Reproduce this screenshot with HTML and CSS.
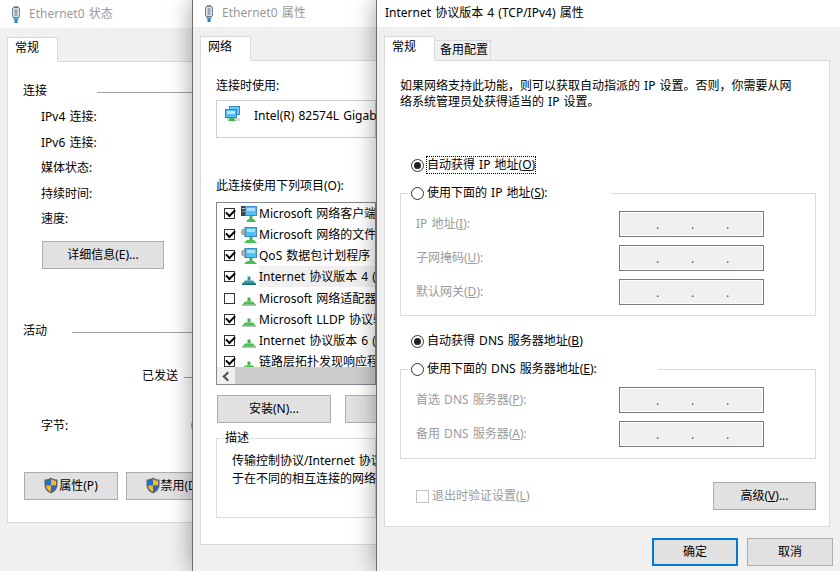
FILE: index.html
```html
<!DOCTYPE html>
<html lang="zh-CN">
<head>
<meta charset="utf-8">
<title>Ethernet0</title>
<link rel="stylesheet" href="styles.css">
</head>
<body>
<svg class="defs" aria-hidden="true">
  <symbol id="plug" viewBox="0 0 10 17">
    <rect x="3" y="0" width="4" height="2" fill="#8a97a6"/>
    <rect x="1.5" y="1.5" width="7" height="10" rx="1.5" fill="#dfe5ea" stroke="#6f7c8b"/>
    <rect x="3.5" y="3" width="3" height="7" fill="#9aa7b5"/>
    <rect x="2.5" y="12" width="5" height="2" fill="#5aa6dc"/>
    <rect x="3.5" y="14" width="3" height="3" fill="#1f7fc4"/>
  </symbol>
  <symbol id="base" viewBox="0 0 16 16">
    <rect x="6.5" y="7.5" width="3" height="4" fill="#3fb54a"/>
    <path d="M1 15 L4 11.5 H12 L15 15 Z" fill="#49bf54"/>
    <rect x="1" y="14.5" width="14" height="1.5" fill="#b9bdb9"/>
  </symbol>
  <symbol id="base-teal" viewBox="0 0 16 16">
    <rect x="6.5" y="7.5" width="3" height="4" fill="#2b9aa0"/>
    <path d="M1 15 L4 11.5 H12 L15 15 Z" fill="#2f9ea6"/>
    <rect x="1" y="14.5" width="14" height="1.5" fill="#1f6f78"/>
  </symbol>
  <symbol id="mon-client" viewBox="0 0 16 16">
    <rect x="0" y="0" width="5" height="10" fill="#3f444a"/>
    <rect x="1" y="2" width="3" height="1" fill="#c8ccd0"/>
    <rect x="1" y="5" width="3" height="1" fill="#8d9298"/>
    <rect x="4.5" y="0.5" width="11" height="9" fill="#4fc0f5" stroke="#3a8cc8"/>
    <rect x="6" y="2" width="8" height="3" fill="#a9e3fb"/>
    <rect x="8.5" y="10" width="3" height="3" fill="#3fb54a"/>
    <path d="M5 16 L7 13 H13 L15 16 Z" fill="#49bf54"/>
  </symbol>
  <symbol id="mon-gear" viewBox="0 0 16 16">
    <circle cx="3.500" cy="5" r="3" fill="#c6cace" stroke="#8b9096"/>
    <path d="M3.500 0V10M0 5H7M1 2L6 8M6 2L1 8" stroke="#a3a8ad"/>
    <rect x="4.500" y="0.500" width="11" height="9" fill="#4fc0f5" stroke="#3a8cc8"/>
    <rect x="6" y="2" width="8" height="3" fill="#a9e3fb"/>
    <rect x="8.500" y="10" width="3" height="3" fill="#3fb54a"/>
    <path d="M3 16 L6 13 H13 L16 16 Z" fill="#49bf54"/>
  </symbol>
  <symbol id="adapter" viewBox="0 0 15 15">
    <rect x="4.500" y="0.500" width="10" height="8" fill="#6ccbf5" stroke="#3a8cc8"/>
    <rect x="0.500" y="3.500" width="11" height="8" fill="#4fc0f5" stroke="#2f86c6"/>
    <rect x="2" y="5" width="8" height="3" fill="#b5e8fc"/>
    <rect x="2" y="12" width="13" height="3" fill="#d6d9d6"/>
    <path d="M3.500 15 L5 12 H9 L10.500 15 Z" fill="#3fb54a"/>
  </symbol>
  <symbol id="shield" viewBox="0 0 14 17">
    <path d="M7 0.500 C9 2 11.500 2.500 13.500 2.500 V8 C13.500 12 10.500 15 7 16.500 C3.500 15 0.500 12 0.500 8 V2.500 C2.500 2.500 5 2 7 0.500 Z" fill="#5b6470"/>
    <path d="M7 2 V8.500 H2 V3.800 C3.800 3.700 5.500 3.200 7 2 Z" fill="#1c6fc4"/>
    <path d="M7 2 C8.500 3.200 10.200 3.700 12 3.800 V8.500 H7 Z" fill="#f6b82a"/>
    <path d="M2 8.500 H7 V14.800 C4.200 13.500 2.200 11.300 2 8.500 Z" fill="#f6b82a"/>
    <path d="M7 8.500 H12 C11.800 11.300 9.800 13.500 7 14.800 Z" fill="#1c6fc4"/>
  </symbol>
</svg>

<section class="window win-status">
  <header class="titlebar titlebar-tall inactive">
    <svg class="plug"><use href="#plug"/></svg><span>Ethernet0 状态</span>
  </header>
  <nav class="tabs"><span class="tab active">常规</span></nav>
  <div class="panel status-panel">
    <div class="group-head"><span>连接</span><i class="rule rule-long"></i></div>
    <ul class="facts">
      <li>IPv4 连接:</li>
      <li>IPv6 连接:</li>
      <li>媒体状态:</li>
      <li>持续时间:</li>
      <li>速度:</li>
    </ul>
    <button class="btn btn-details">详细信息(E)...</button>
    <div class="group-head head-activity"><span>活动</span><i class="rule rule-short"></i></div>
    <div class="sent"><span>已发送</span><i class="rule"></i></div>
    <div class="bytes"><span>字节:</span><span>0</span></div>
    <div class="btn-row">
      <button class="btn btn-shield"><svg class="shield"><use href="#shield"/></svg>属性(P)</button>
      <button class="btn btn-shield"><svg class="shield"><use href="#shield"/></svg>禁用(D)</button>
    </div>
  </div>
</section>

<section class="window win-props">
  <header class="titlebar inactive">
    <svg class="plug"><use href="#plug"/></svg><span>Ethernet0 属性</span>
  </header>
  <nav class="tabs"><span class="tab active">网络</span></nav>
  <div class="panel props-panel">
    <div class="line">连接时使用:</div>
    <div class="adapter"><svg class="adapter-icon"><use href="#adapter"/></svg><span>Intel(R) 82574L Gigabit Network Connection</span></div>
    <div class="line items-head">此连接使用下列项目(O):</div>
    <div class="listbox">
      <ul class="rows">
        <li class="row"><span class="check on"></span><svg class="row-icon"><use href="#mon-client"/></svg><span class="row-text">Microsoft 网络客户端</span></li>
        <li class="row"><span class="check on"></span><svg class="row-icon"><use href="#mon-gear"/></svg><span class="row-text">Microsoft 网络的文件和打印机共享</span></li>
        <li class="row"><span class="check on"></span><svg class="row-icon"><use href="#mon-gear"/></svg><span class="row-text">QoS 数据包计划程序</span></li>
        <li class="row selected"><span class="check on"></span><svg class="row-icon"><use href="#base-teal"/></svg><span class="row-text">Internet 协议版本 4 (TCP/IPv4)</span></li>
        <li class="row"><span class="check"></span><svg class="row-icon"><use href="#base"/></svg><span class="row-text">Microsoft 网络适配器多路传送器协议</span></li>
        <li class="row"><span class="check on"></span><svg class="row-icon"><use href="#base"/></svg><span class="row-text">Microsoft LLDP 协议驱动程序</span></li>
        <li class="row"><span class="check on"></span><svg class="row-icon"><use href="#base"/></svg><span class="row-text">Internet 协议版本 6 (TCP/IPv6)</span></li>
        <li class="row"><span class="check on"></span><svg class="row-icon"><use href="#base"/></svg><span class="row-text">链路层拓扑发现响应程序</span></li>
      </ul>
      <div class="hscroll"><span class="arrow"></span><span class="thumb"></span></div>
    </div>
    <div class="btn-row props-btns">
      <button class="btn btn-install">安装(N)...</button>
      <button class="btn btn-install">卸载(U)</button>
    </div>
    <fieldset class="box desc">
      <legend>描述</legend>
      <p>传输控制协议/Internet 协议。该协议是默认的广域网络协议，用<br>于在不同的相互连接的网络上通讯。</p>
    </fieldset>
  </div>
</section>

<section class="window win-ipv4">
  <header class="titlebar"><span>Internet 协议版本 4 (TCP/IPv4) 属性</span></header>
  <nav class="tabs"><span class="tab active">常规</span><span class="tab">备用配置</span></nav>
  <div class="panel ipv4-panel">
    <p class="intro">如果网络支持此功能，则可以获取自动指派的 IP 设置。否则，你需要从网<br>络系统管理员处获得适当的 IP 设置。</p>
    <div class="choice first"><span class="radio on"></span><span class="focus">自动获得 IP 地址(<u>O</u>)</span></div>
    <fieldset class="box ip-box">
      <legend class="choice legend-ip"><span class="radio"></span><span class="plain">使用下面的 IP 地址(<u>S</u>):</span></legend>
      <div class="field"><span>IP 地址(<u>I</u>):</span><span class="ip"><b>.</b><b>.</b><b>.</b></span></div>
      <div class="field"><span>子网掩码(<u>U</u>):</span><span class="ip"><b>.</b><b>.</b><b>.</b></span></div>
      <div class="field"><span>默认网关(<u>D</u>):</span><span class="ip"><b>.</b><b>.</b><b>.</b></span></div>
    </fieldset>
    <div class="choice dns-first"><span class="radio on"></span><span class="plain">自动获得 DNS 服务器地址(<u>B</u>)</span></div>
    <fieldset class="box dns-box">
      <legend class="choice legend-dns"><span class="radio"></span><span class="plain">使用下面的 DNS 服务器地址(<u>E</u>):</span></legend>
      <div class="field"><span>首选 DNS 服务器(<u>P</u>):</span><span class="ip"><b>.</b><b>.</b><b>.</b></span></div>
      <div class="field"><span>备用 DNS 服务器(<u>A</u>):</span><span class="ip"><b>.</b><b>.</b><b>.</b></span></div>
    </fieldset>
    <div class="bottom-row">
      <div class="validate"><span class="check disabled"></span><span>退出时验证设置(<u>L</u>)</span></div>
      <button class="btn btn-adv">高级(<u>V</u>)...</button>
    </div>
  </div>
  <footer class="dialog-foot">
    <button class="btn btn-dialog default">确定</button>
    <button class="btn btn-dialog">取消</button>
  </footer>
</section>
</body>
</html>
```
FILE: styles.css
```css
* { box-sizing: border-box; }
html, body { margin: 0; padding: 0; }
body {
  position: relative;
  width: 840px;
  height: 571px;
  overflow: hidden;
  background: #f0f0f0;
  color: #000;
  font: 12px/16px "Noto Sans", "Noto Sans CJK SC", sans-serif;
  word-spacing: 1px;
}
.defs { position: absolute; width: 0; height: 0; }
ul { list-style: none; margin: 0; padding: 0; }
p { margin: 0; }
u { text-underline-offset: 1px; }

/* Windows on the desktop */
.window {
  position: absolute;
  top: 0;
  height: 571px;
  display: flex;
  flex-direction: column;
  background: #f0f0f0;
  overflow: hidden;
  padding: 0 7px;
}
.win-status { left: 0; width: 205px; z-index: 1; }
.win-props {
  left: 192px;
  width: 192px;
  z-index: 2;
  border-left: 1px solid #6e6e6e;
  box-shadow: 0 0 22px rgba(0, 0, 0, .38);
}
.win-ipv4 {
  left: 376px;
  width: 464px;
  z-index: 3;
  border-left: 1px solid #6e6e6e;
  box-shadow: 0 0 22px rgba(0, 0, 0, .38);
}

.titlebar {
  height: 27px;
  margin: 0 -7px;
  padding: 0 0 1px 8px;
  background: #fff;
  display: flex;
  align-items: center;
  flex: none;
}
.titlebar-tall { height: 28px; padding-bottom: 0; padding-left: 11px; }
.win-props .titlebar { padding-left: 11px; }
.inactive { color: #999; }
.plug { width: 10px; height: 17px; margin-right: 8px; flex: none; }

.tabs {
  display: flex;
  align-items: flex-end;
  flex: none;
  height: 25px;
  margin-top: 9px;
  margin-bottom: -1px;
  position: relative;
  z-index: 1;
}
.tab {
  height: 21px;
  padding: 1px 0 0 5px;
  width: 56px;
  border: 1px solid #d9d9d9;
  border-left: 0;
  background: #f0f0f0;
}
.tab.active {
  width: 51px;
  height: 25px;
  padding: 2px 0 0 7px;
  background: #fff;
  border: 1px solid #d9d9d9;
  border-bottom-color: #fff;
}
.panel {
  background: #fff;
  border: 1px solid #d9d9d9;
  flex: none;
}

/* Buttons */
.btn {
  font: inherit;
  word-spacing: inherit;
  color: #000;
  background: #e1e1e1;
  border: 1px solid #adadad;
  height: 28px;
  padding: 0;
  border-radius: 0;
  display: inline-flex;
  align-items: center;
  justify-content: center;
  flex: none;
}
.btn-row { display: flex; }

/* Status window */
.status-panel { height: 462px; padding: 21px 0 0 15px; }
.group-head { display: flex; align-items: center; height: 16px; }
.rule { display: block; flex: 1; height: 1px; background: #a0a0a0; margin-top: 2px; }
.rule-long { margin-left: 50px; }
.rule-short { margin-left: 25px; }
.facts { margin: 5.25px 0 0 18px; }
.facts li { height: 25.5px; line-height: 25.5px; }
.btn-details { width: 122px; margin: 9.25px 0 0 19px; }
.head-activity { margin-top: 54px; }
.sent { display: flex; align-items: center; height: 16px; margin: 29px 0 0 119px; }
.sent .rule { margin-left: 6px; }
.bytes { display: flex; height: 16px; margin: 34px 0 0 18px; }
.bytes span:first-child { width: 150px; flex: none; }
.status-panel .btn-row { margin: 38px 0 0 1px; gap: 8px; }
.btn-shield { width: 94px; gap: 1px; }
.shield { width: 14px; height: 17px; margin-top: -1px; }

/* Properties window */
.props-panel { height: 485px; padding: 17px 0 0 15px; }
.line { height: 16px; white-space: nowrap; }
.adapter {
  height: 38px;
  margin-top: 6px;
  border: 1px solid #cfcfcf;
  padding: 5px 0 0 8px;
  display: flex;
  white-space: nowrap;
}
.adapter-icon { width: 15px; height: 15px; flex: none; margin-right: 14px; }
.adapter span { padding-top: 2px; }
.items-head { margin-top: 40px; }
.listbox {
  height: 183px;
  margin-top: 8px;
  border: 1px solid #828790;
  display: flex;
  flex-direction: column;
  overflow: hidden;
}
.rows { height: 164px; overflow: hidden; padding-left: 7px; flex: none; }
.row { height: 21.15px; display: flex; align-items: center; white-space: nowrap; }
.row-icon { width: 16px; height: 16px; margin-left: 6px; flex: none; }
.row-text { margin-left: 2px; flex: 1; height: 21px; line-height: 21px; }
.selected .row-text { background: #f0f0f0; }
.check {
  width: 11px;
  height: 11px;
  flex: none;
  border: 1px solid #333;
  background: #fff;
  position: relative;
}
.check.on::after {
  content: "";
  position: absolute;
  left: 1px;
  top: 0;
  width: 7px;
  height: 4px;
  border: solid #000;
  border-width: 0 0 2px 2px;
  transform: rotate(-45deg);
}
.check.disabled { width: 13px; height: 13px; border-color: #c4c4c4; }
.hscroll { height: 17px; background: #f0f0f0; display: flex; flex: none; }
.arrow { width: 18px; position: relative; }
.arrow::after {
  content: "";
  position: absolute;
  left: 7px;
  top: 6px;
  width: 5px;
  height: 5px;
  border: solid #505050;
  border-width: 0 0 2px 2px;
  transform: rotate(45deg);
}
.thumb { flex: 1; background: #cdcdcd; }
.props-btns { margin: 10px 0 0 1px; gap: 14px; }
.btn-install { width: 114px; }

/* Group boxes */
.box {
  min-width: 0;
  margin: 0;
  padding: 0;
  border: 1px solid #dcdcdc;
}
.box legend { padding: 0; }
.desc { height: 88px; margin-top: 7px; }
.desc legend { margin-left: 7px; padding: 0 1px; }
.desc p { margin: 6px 0 0 15px; line-height: 18px; white-space: nowrap; }

/* IPv4 window */
.ipv4-panel { height: 467px; padding: 17px 13px 0 15px; margin-right: 3px; }
.intro { white-space: nowrap; }
.choice { display: flex; align-items: center; height: 18px; white-space: nowrap; }
.radio {
  width: 13px;
  height: 13px;
  border-radius: 50%;
  border: 1px solid #333;
  background: #fff;
  flex: none;
  position: relative;
}
.radio.on::after {
  content: "";
  position: absolute;
  inset: 2px;
  border-radius: 50%;
  background: #222;
}
.focus { margin-left: 2px; padding: 0 1px; height: 18px; line-height: 17px; outline: 1px dotted #000; outline-offset: -1px; }
.plain { margin-left: 3px; }
.first { margin: 46px 0 0 11px; }
.ip-box { margin-top: 10px; padding-bottom: 10px; }
.legend-ip { margin-left: 10px; width: 200px; }
.legend-dns { margin-left: 10px; width: 247px; }
.field {
  display: grid;
  grid-template-columns: 203px 145px;
  align-items: center;
  height: 26px;
  margin-top: 8px;
  padding-left: 15px;
  color: #9b9b9b;
  white-space: nowrap;
}
.ip-box .field:first-of-type, .dns-box .field:first-of-type { margin-top: 9px; }
.ip {
  height: 26px;
  display: flex;
  gap: 32px;
  padding-left: 36px;
  background: #f0f0f0;
  border: 1px solid #7a7a7a;
  box-shadow: inset 0 0 0 1px #fff;
  color: #555;
  line-height: 26px;
}
.ip b { font-weight: 400; width: 3px; }
.dns-first { margin: 16px 0 0 11px; }
.dns-box { margin-top: 10px; padding-bottom: 11px; }
.bottom-row { display: flex; justify-content: space-between; align-items: center; margin-top: 23px; }
.validate { display: flex; align-items: center; gap: 3px; margin-left: 16px; color: #9b9b9b; }
.btn-adv { width: 103px; }
.dialog-foot { display: flex; justify-content: flex-end; gap: 9px; margin-top: 11px; }
.btn-dialog { width: 86px; }
.default { border: 2px solid #0078d7; }
```
